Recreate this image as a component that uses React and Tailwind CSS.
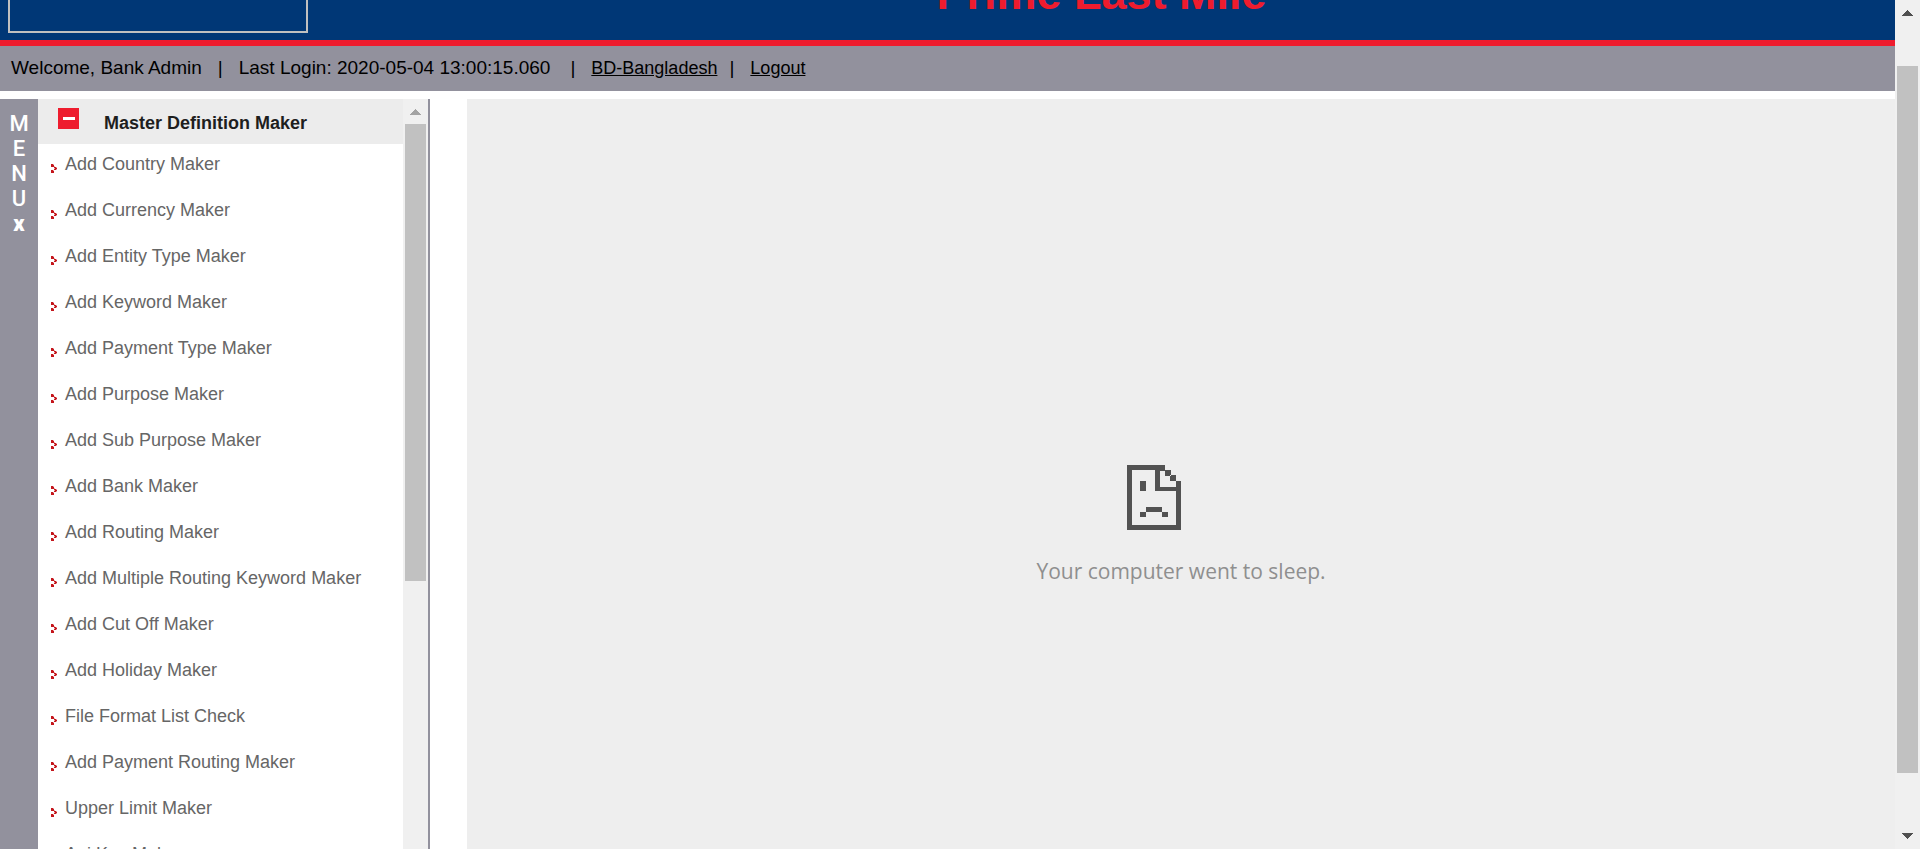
const items = [
  'Add Country Maker',
  'Add Currency Maker',
  'Add Entity Type Maker',
  'Add Keyword Maker',
  'Add Payment Type Maker',
  'Add Purpose Maker',
  'Add Sub Purpose Maker',
  'Add Bank Maker',
  'Add Routing Maker',
  'Add Multiple Routing Keyword Maker',
  'Add Cut Off Maker',
  'Add Holiday Maker',
  'File Format List Check',
  'Add Payment Routing Maker',
  'Upper Limit Maker',
  'Api Key Maker',
];

function Bullet() {
  return (
    <svg className="mt-2 h-[9px] w-[6px] shrink-0" viewBox="0 0 6 9" shapeRendering="crispEdges" aria-hidden="true">
      <path d="M0 0h3v3H0zM3 3h3v3H3zM0 6h3v3H0z" fill="#c4161c" />
      <path d="M2 0h1v1H2zM3 2h1v1H3zM5 3h1v1H5zM3 4h1v1H3zM5 5h1v1H5zM2 6h1v1H2z" fill="#e9a3a5" />
    </svg>
  );
}

function Arrow({ down, className }) {
  return (
    <svg className={`h-[6px] w-[11px] ${className}`} viewBox="0 0 11 6" shapeRendering="crispEdges" aria-hidden="true">
      <path
        d={down ? 'M0 0h11v1H0zM1 1h9v1H1zM2 2h7v1H2zM3 3h5v1H3zM4 4h3v1H4zM5 5h1v1H5z' : 'M5 0h1v1H5zM4 1h3v1H4zM3 2h5v1H3zM2 3h7v1H2zM1 4h9v1H1zM0 5h11v1H0z'}
        fill="currentColor"
      />
    </svg>
  );
}

function SadPage() {
  return (
    <svg className="h-[66px] w-[54px]" viewBox="0 0 54 66" shapeRendering="crispEdges" aria-hidden="true">
      <path
        fill="#525252"
        fillRule="evenodd"
        d="M0 0h38v6h-5v16h16v-6h5v49H0zM5 5v55h44V26H28V5zM38 5h6v6h-6zM43 10h6v6h-6zM13 16h6v10h-6zM19 42h16v5H19zM13 47h6v5h-6zM35 47h6v5h-6z"
      />
    </svg>
  );
}

export default function App() {
  return (
    <div className="flex h-screen overflow-hidden bg-white font-['Liberation_Sans',Arial,sans-serif]">
      <div className="flex min-w-0 flex-1 flex-col">
        <header className="flex h-[46px] shrink-0 items-end overflow-hidden border-b-6 border-[#ee1c2e] bg-[#003776]">
          <div className="mb-[7px] ml-2 h-20 w-[300px] shrink-0 border-2 border-[#c0c0c0]" />
          <h1 className="flex-1 pb-6 text-center text-[45px] leading-[45px] font-bold whitespace-nowrap text-[#ee1c2e]">Prime Last Mile</h1>
        </header>

        <div className="flex h-[45px] shrink-0 items-center bg-[#92919d] pl-[11px] text-[19px] whitespace-nowrap text-black">
          <div className="flex items-baseline">
            <span>Welcome, Bank Admin</span>
            <span className="mx-4">|</span>
            <span>Last Login: 2020-05-04 13:00:15.060</span>
            <span className="mr-4 ml-5">|</span>
            <a href="#country" className="text-[18px] underline">BD-Bangladesh</a>
            <span className="mr-4 ml-3">|</span>
            <a href="#logout" className="text-[18px] underline">Logout</a>
          </div>
        </div>

        <div className="mt-2 flex min-h-0 flex-1">
          <button
            type="button"
            aria-label="Menu, close"
            className="flex w-[38px] shrink-0 flex-col items-center bg-[#92919d] pt-3 font-[Roboto,sans-serif] text-[22px] leading-[25px] font-medium text-white"
          >
            <span>M</span>
            <span>E</span>
            <span>N</span>
            <span>U</span>
            <span className="font-black">x</span>
          </button>

          <aside className="flex w-[392px] shrink-0 border-r-2 border-[#92919d]">
            <nav className="min-w-0 flex-1 overflow-hidden">
              <div className="flex h-[45px] bg-[#ececec] pl-5">
                <button type="button" aria-label="Collapse" className="mt-[9px] flex size-[21px] items-center justify-center bg-[#ee1c2e]">
                  <span className="h-[3px] w-3 bg-white" />
                </button>
                <h2 className="ml-[25px] pt-3 text-[18px] leading-6 font-bold text-[#1e1e1e]">Master Definition Maker</h2>
              </div>
              <ul>
                {items.map((label) => (
                  <li key={label} className="h-[46px] pt-3">
                    <a href="#maker" className="ml-[13px] flex gap-2 text-[18px] leading-4 whitespace-nowrap text-[#666666]">
                      <Bullet />
                      <span>{label}</span>
                    </a>
                  </li>
                ))}
              </ul>
            </nav>
            <div className="flex w-[25px] flex-col items-center bg-[#f0f0f0] pt-2.5 text-[#a3a3a3]">
              <Arrow className="shrink-0" />
              <div className="mt-[9px] h-[61.8%] w-[21px] shrink-0 bg-[#c1c1c1]" />
            </div>
          </aside>

          <main className="ml-[37px] flex flex-1 flex-col bg-[#eeeeee] pt-[366px]">
            <div className="mx-auto flex flex-col">
              <div className="ml-[91px]">
                <SadPage />
              </div>
              <p className="mt-6 font-['Open_Sans','Noto_Sans',sans-serif] text-[21px] leading-8 text-[#8f8f8f]">Your computer went to sleep.</p>
            </div>
          </main>
        </div>
      </div>

      <div className="flex w-[25px] shrink-0 flex-col items-center bg-[#f0f0f0] py-2.5 text-[#505050]">
        <Arrow className="shrink-0" />
        <div className="mt-[50px] h-[85.3%] w-[21px] shrink-0 bg-[#c1c1c1]" />
        <Arrow down className="mt-auto shrink-0" />
      </div>
    </div>
  );
}
